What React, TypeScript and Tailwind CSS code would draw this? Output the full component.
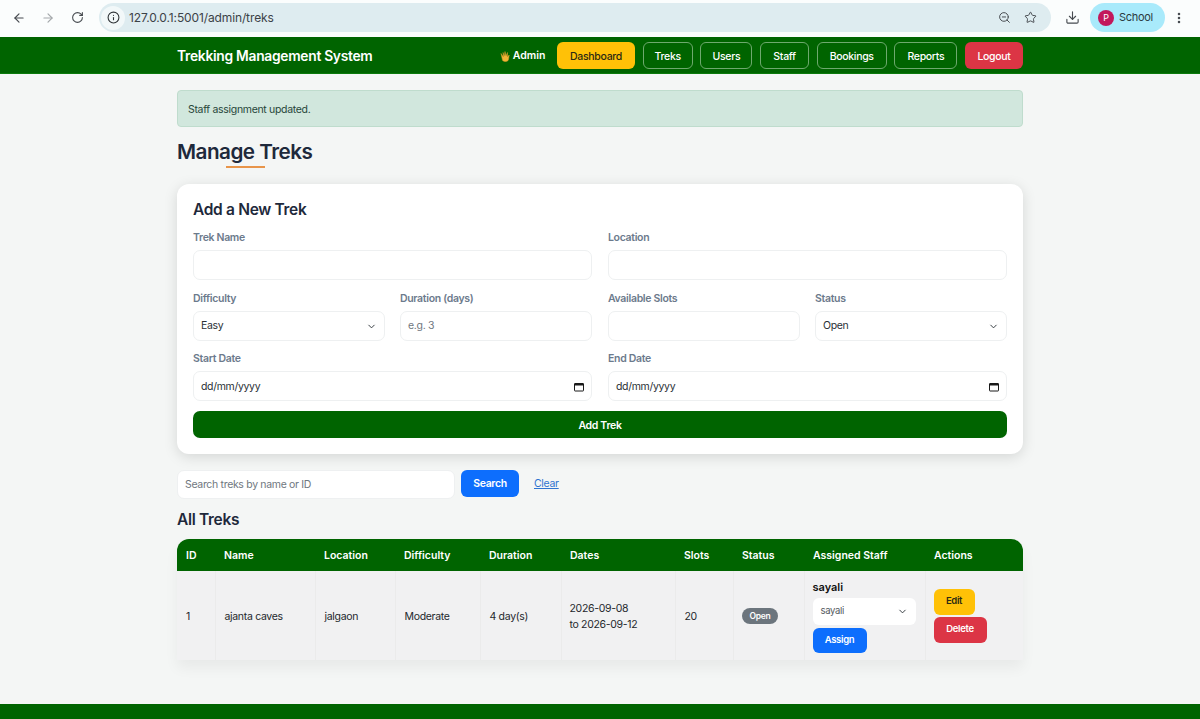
import { ArrowLeft, ArrowRight, RotateCw, Info, ZoomOut, Star, Download, MoreVertical, ChevronDown } from 'lucide-react'

const label = 'block text-[10.5px] leading-[13px] font-semibold text-[#6c7a8c] mb-[6px]'
const field = 'h-[30px] bg-white border border-[#eef0f1] rounded-[7px] pl-[7px] pr-[7px] pt-[1px] flex items-center justify-between text-[10.5px] text-[#2a3036]'

function Hand() {
  return (
    <svg width="12" height="12" viewBox="0 0 12 12" className="shrink-0">
      <path d="M2 3.5 4.5 7 4 2.5 5.5 6 6 1.5 7 6l1.5-3.5L8.4 7l1.8-2-.7 4.5A2.6 2.6 0 0 1 7 11.5H5.6c-1 0-1.6-.5-2.1-1.2Z" fill="#f2b535" stroke="#d9962a" strokeWidth=".5" />
    </svg>
  )
}

function DateIcon() {
  return (
    <svg width="10" height="10" viewBox="0 0 10 10" className="shrink-0">
      <path d="M1 1.5h8a.5.5 0 0 1 .5.5v6.5a.5.5 0 0 1-.5.5H1a.5.5 0 0 1-.5-.5V2a.5.5 0 0 1 .5-.5Z" fill="none" stroke="#1a1a1a" strokeWidth="1" />
      <rect x="0.5" y="1.5" width="9" height="2" fill="#1a1a1a" />
    </svg>
  )
}

const navLink = 'h-[27px] pt-[2px] flex items-center justify-center rounded-[6px] text-[10.5px] font-medium'
const navOutline = navLink + ' border border-[#6ea96e] text-white'

function Chrome() {
  return (
    <div className="h-[37px] bg-[#fbfdfd] flex items-center pl-[12px] pr-[12px] pb-[2px] text-[#474b50]">
      <ArrowLeft size={14} strokeWidth={2} />
      <ArrowRight size={14} strokeWidth={2} className="ml-[15px] text-[#a4a8ab]" />
      <RotateCw size={13} strokeWidth={2} className="ml-[16px]" />
      <div className="ml-[15px] h-[29px] w-[952px] rounded-full bg-[#deecf0] flex items-center pl-[2px] pr-[14px]">
        <span className="w-[24px] h-[24px] rounded-full bg-[#f2f8f9] flex items-center justify-center">
          <Info size={13} strokeWidth={2} className="text-[#2f3337]" />
        </span>
        <span className="ml-[4px] text-[12px] tracking-[-0.01em] text-[#3c4247]">127.0.0.1:5001/admin/treks</span>
        <ZoomOut size={13} strokeWidth={1.8} className="ml-auto" />
        <Star size={13} strokeWidth={1.8} className="ml-[13px]" />
      </div>
      <Download size={15} strokeWidth={1.8} className="ml-[14px]" />
      <div className="ml-[10px] h-[29px] w-[75px] shrink-0 rounded-full bg-[#a9eafb] flex items-center pl-[8px]">
        <span className="w-[16px] h-[16px] rounded-full bg-[#c2185b] text-white text-[9px] flex items-center justify-center">P</span>
        <span className="ml-[5px] text-[11px] text-[#2b3a42]">School</span>
      </div>
      <MoreVertical size={14} strokeWidth={2.4} className="ml-[7px]" />
    </div>
  )
}

function Nav() {
  return (
    <nav className="h-[37px] bg-[#006400] border-b border-[#0b7a0b]">
      <div className="w-[846px] mx-auto h-full pt-[1px] flex items-center justify-between">
        <span className="pt-[1px] text-[13.8px] tracking-[-0.02em] font-semibold text-white">Trekking Management System</span>
        <div className="flex items-center gap-[7.67px]">
          <span className="flex items-center gap-[2px] text-[10.5px] tracking-normal font-semibold text-white mr-[4px]">
            <Hand /> Admin
          </span>
          <a className={navLink + ' w-[78px] bg-[#ffc107] text-[#2b2a14]'}>Dashboard</a>
          <a className={navOutline + ' w-[50px]'}>Treks</a>
          <a className={navOutline + ' w-[52px]'}>Users</a>
          <a className={navOutline + ' w-[49px]'}>Staff</a>
          <a className={navOutline + ' w-[70px]'}>Bookings</a>
          <a className={navOutline + ' w-[63px]'}>Reports</a>
          <a className={navLink + ' w-[58px] bg-[#dc3545] text-white'}>Logout</a>
        </div>
      </div>
    </nav>
  )
}

function AddTrekForm() {
  return (
    <section className="mt-[16px] h-[270px] bg-white rounded-[12px] shadow-[0_3px_14px_rgba(0,0,0,0.13)] px-[16px] pt-[16px]">
      <h2 className="text-[15.5px] leading-[19px] font-semibold text-[#1e293b]">Add a New Trek</h2>
      <div className="mt-[12px] grid grid-cols-2 gap-x-[16px] gap-y-[11.5px]">
        <div>
          <label className={label}>Trek Name</label>
          <div className={field} />
        </div>
        <div>
          <label className={label}>Location</label>
          <div className={field} />
        </div>
        <div className="grid grid-cols-2 gap-x-[15px]">
          <div>
            <label className={label}>Difficulty</label>
            <div className={field}>Easy<ChevronDown size={11} strokeWidth={2} /></div>
          </div>
          <div>
            <label className={label}>Duration (days)</label>
            <div className={field}><span className="text-[#6f7780]">e.g. 3</span></div>
          </div>
        </div>
        <div className="grid grid-cols-2 gap-x-[15px]">
          <div>
            <label className={label}>Available Slots</label>
            <div className={field} />
          </div>
          <div>
            <label className={label}>Status</label>
            <div className={field}>Open<ChevronDown size={11} strokeWidth={2} /></div>
          </div>
        </div>
        <div>
          <label className={label}>Start Date</label>
          <div className={field}>dd/mm/yyyy<DateIcon /></div>
        </div>
        <div>
          <label className={label}>End Date</label>
          <div className={field}>dd/mm/yyyy<DateIcon /></div>
        </div>
      </div>
      <button className="mt-[10px] w-full h-[27px] pt-[2px] rounded-[7px] bg-[#006400] text-white text-[10.5px] font-semibold">Add Trek</button>
    </section>
  )
}

const cols = [
  ['ID', 38],
  ['Name', 100],
  ['Location', 80],
  ['Difficulty', 85],
  ['Duration', 81],
  ['Dates', 114],
  ['Slots', 58],
  ['Status', 71],
  ['Assigned Staff', 121],
  ['Actions', 98],
] as const

const td = 'px-[9px] align-middle border-r border-[#ebebeb] last:border-r-0'
const tdTight = 'pl-[8px] pr-[9px] align-middle border-r border-[#ebebeb] last:border-r-0'

function TrekTable() {
  return (
    <div className="mt-[10px] rounded-t-[12px] overflow-hidden shadow-[0_8px_14px_rgba(0,0,0,0.05)]">
      <table className="w-[846px] table-fixed border-collapse text-[10.5px] text-[#24282c]">
        <colgroup>
          {cols.map(([name, w]) => <col key={name} style={{ width: w }} />)}
        </colgroup>
        <thead>
          <tr className="h-[32px] bg-[#006400] text-white">
            {cols.map(([name]) => (
              <th key={name} className="px-[9px] pt-[1px] text-left text-[10.5px] tracking-normal font-semibold">{name}</th>
            ))}
          </tr>
        </thead>
        <tbody>
          <tr className="h-[89px] bg-[#f1f1f2]">
            <td className={td}><div className="pt-[2px]">1</div></td>
            <td className={td}><div className="pt-[2px]">ajanta caves</div></td>
            <td className={td}><div className="pt-[2px]">jalgaon</div></td>
            <td className={td}><div className="pt-[2px]">Moderate</div></td>
            <td className={td}><div className="pt-[2px]">4 day(s)</div></td>
            <td className={tdTight}><div className="pt-[2px]">2026-09-08<br />to 2026-09-12</div></td>
            <td className={td}><div className="pt-[2px]">20</div></td>
            <td className={tdTight}>
              <span className="inline-block h-[16px] leading-[16px] px-[8px] rounded-full bg-[#6c757d] text-white text-[8.5px] font-semibold">Open</span>
            </td>
            <td className={tdTight}>
              <div className="pt-[3px] text-[11px] leading-[13px] tracking-normal font-semibold text-[#111]">sayali</div>
              <div className="mt-[4px] h-[27px] w-[103px] rounded-[6px] bg-white flex items-center justify-between px-2 text-[9.5px] text-[#555b61]">
                sayali<ChevronDown size={11} strokeWidth={2} className="text-[#2a3036]" />
              </div>
              <button className="mt-[3px] block h-[25px] w-[54px] rounded-[6px] bg-[#0d6efd] text-white text-[9.5px] font-semibold">Assign</button>
            </td>
            <td className={tdTight}>
              <button className="block h-[26px] w-[41px] rounded-[6px] bg-[#ffc107] text-[#2b2a14] text-[9.5px] font-semibold">Edit</button>
              <button className="mt-[2px] block h-[26px] w-[53px] rounded-[6px] bg-[#dc3545] text-white text-[9.5px] font-semibold">Delete</button>
            </td>
          </tr>
        </tbody>
      </table>
    </div>
  )
}

export default function App() {
  return (
    <div className="h-screen overflow-hidden flex flex-col bg-[#f4f6f5] font-['Inter',sans-serif] tracking-[-0.02em]">
      <Chrome />
      <Nav />
      <main className="flex-1 w-[846px] mx-auto pt-[16px]">
        <div className="h-[37px] rounded-[4px] bg-[#d1e7dd] border border-[#bfdccd] flex items-center px-[10px] pt-[2px] text-[10.5px] text-[#27463a]">
          Staff assignment updated.
        </div>
        <h1 className="mt-[11px] text-[20.7px] leading-[27px] font-semibold tracking-[-0.025em] text-[#1e293b]">Manage Treks</h1>
        <div className="mt-[1px] ml-[49px] w-[39px] h-[2px] bg-[#e8954a]" />
        <AddTrekForm />
        <div className="mt-[16px] flex items-start">
          <div className="w-[278px] h-[29px] bg-white border border-[#eef0f1] rounded-[7px] pl-[7px] flex items-center text-[10.5px] text-[#6f7780]">
            Search treks by name or ID
          </div>
          <button className="ml-[6px] h-[27px] w-[58px] rounded-[6px] bg-[#0d6efd] text-white text-[10.5px] font-semibold">Search</button>
          <a className="ml-[15px] h-[27px] flex items-center text-[10.5px] text-[#2f74d0] underline">Clear</a>
        </div>
        <h2 className="mt-[11px] text-[15.5px] leading-[19px] font-semibold text-[#1e293b]">All Treks</h2>
        <TrekTable />
      </main>
      <footer className="h-[15px] bg-[#006400]" />
    </div>
  )
}
